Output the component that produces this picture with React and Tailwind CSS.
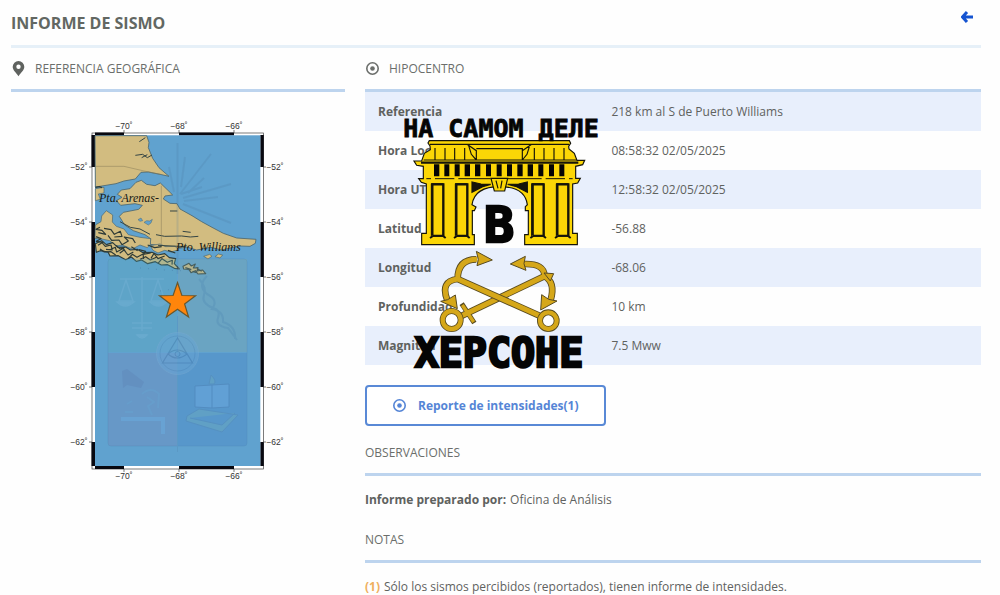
import React from "react";

const ROWS = [
  ["Referencia", "218 km al S de Puerto Williams"],
  ["Hora Local", "08:58:32 02/05/2025"],
  ["Hora UTC", "12:58:32 02/05/2025"],
  ["Latitud", "-56.88"],
  ["Longitud", "-68.06"],
  ["Profundidad", "10 km"],
  ["Magnitud", "7.5 Mww"],
];

const LATS = [
  [-52, 167],
  [-54, 222],
  [-56, 277],
  [-58, 332],
  [-60, 387],
  [-62, 442],
];
const LONS = [
  [-70, 124],
  [-68, 179],
  [-66, 234],
];

function PinIcon() {
  return (
    <svg className="h-4 w-4" viewBox="0 0 16 16" aria-hidden="true">
      <path
        fill="#5f625f"
        fillRule="evenodd"
        d="M7.500 0a5.800 5.800 0 0 1 5.800 5.800c0 3.200-3 5.600-5.800 9.400C4.700 11.400 1.700 9 1.700 5.800A5.800 5.800 0 0 1 7.500 0zm0 3.500a2.200 2.200 0 1 0 0 4.400 2.200 2.200 0 0 0 0-4.400z"
      />
    </svg>
  );
}

function TargetIcon() {
  return (
    <svg className="h-4 w-4" viewBox="0 0 16 16" aria-hidden="true">
      <circle cx="7.500" cy="7.500" r="5.700" fill="none" stroke="currentColor" strokeWidth="1.600" />
      <circle cx="7.500" cy="7.500" r="2.300" fill="currentColor" />
    </svg>
  );
}

function EpicenterMap() {
  return (
    <svg
      className="w-[225px]"
      viewBox="65 115 225 370"
      role="img"
      aria-label="Mapa del epicentro"
      fontFamily='"Liberation Sans", sans-serif'
    >
      <rect x="92" y="133" width="171.500" height="336" fill="#fff" stroke="#444" strokeWidth=".7" />
      <g fill="#080810">
        {[
          [135, 32],
          [222, 55],
          [332, 55],
          [442, 24],
        ].map(([y, h]) => (
          <g key={y}>
            <rect x="91.500" y={y} width="3.500" height={h} />
            <rect x="260.300" y={y} width="3.500" height={h} />
          </g>
        ))}
        {[132.5, 466].map((y) => (
          <g key={y}>
            <rect x="95" y={y} width="29" height="3" />
            <rect x="179" y={y} width="55" height="3" />
          </g>
        ))}
      </g>
      <rect x="95" y="135.300" width="165.300" height="330.700" fill="#60a2cf" />

      <g transform="translate(80 115) scale(.33333)" strokeLinejoin="round">
        <path
          fill="#d2bc80"
          stroke="#4b6670"
          strokeWidth="2.500"
          d="M45 62H200L207 82 205 98 218 130 237 158 267 184 240 178 205 171 183 172 166 192 132 198 108 206 66 213 46 216Z"
        />
        <path
          fill="#d2bc80"
          stroke="#4b6670"
          strokeWidth="2.500"
          d="M168 202L184 196 200 208 225 212 241 204 270 232 278 240 255 243 250 252 270 265 291 266 300 282 336 302 365 320 396 337 430 355 470 369 528 373 526 385 510 394 480 393 460 397 425 405 392 397 350 405 320 396 285 402 240 392 211 388 212 371 195 359 160 347 134 330 118 304 130 292 176 283 187 271 165 266 122 271 109 257 126 247 112 238 124 225 150 221Z"
        />
        <path fill="#d2bc80" stroke="#4b6670" strokeWidth="2" d="M46 221L72 217 72 234 55 237 61 253 46 257ZM46 330L63 320 65 303 79 287 98 300 97 321 109 334 132 342 145 359 180 367 212 371 211 388 202 398 180 390 157 402 127 390 109 393 89 377 66 372 45 370Z" />
        <path fill="#d2bc80" stroke="#2d3d3b" strokeWidth="3.500" d="M46 386l19-9 14 12 19-6 15 14 24-1 14 9 21-2 17 10 27-1 18 8 20-4 14 12 19 3-4 15 15 16-15-2-20-11-19 1-18-10-23 6-18-11-16 4-15-13-17 8-22-12-25 1-6-12-23-4-12 5zM309 454l18-9 7 8 12-6-6 12 14-1-3 10 17-3 9 11-23 1-8-10-13 6-6-10-16-1z" />
        <path fill="#d2bc80" stroke="#4b6670" strokeWidth="2" d="M371 424l18-6 7 6-12 8zM405 425l10-8 13 3-8 9zM211 392l29-5 17 8 28-1 11 10-23 7-19-5-20 8-15-8z" />
        <path
          fill="none"
          stroke="#2d3a36"
          strokeWidth="3.500"
          d="M46 217l12-2 8 3M60 337l-12 6 18 3 11 12-22-5M72 340l21 4 10 14 18-9 5 15-23 2M84 361l11 15 22-1 9 14 19-11-12-12 25 5 8 13M48 365l15 6-14 8 21 3M54 391l12-8 10 11 17-4 4 15-19-2M88 405l18-8 4 14 20-11 9 14M119 415l13-10 12 15 16-9M145 430l12-12 14 9 18-10 2 15M177 404l20 5-8 9 23-4M180 433l17-8 14 10 18-8M213 430l9-15 12 16 20-8M234 445l12-14 16 11 15-6-1 13M154 395l19 12M203 390l21 8 21-3M264 406l22 8M316 458l18 6M338 469l12 4M352 461l13 8M60 402l13 9 20-1 14 10M109 391l9 9 16-3"
        />
        <path fill="none" stroke="#344443" strokeWidth="3" d="M228 359l26 5 51-1 26 3 24-2M308 349l24 3M234 391l83 4M120 320l31 17 29 5 30 16M178 80l18-12M166 121l22-3 14 10 14-8M185 128l17-9M270 288l22 0" />
        <path fill="none" stroke="#887c57" strokeWidth="1.500" d="M46 154h86l60 14 50 10M244 212v175" />
        <path fill="#60a2cf" stroke="#4b6670" strokeWidth="1.500" d="M174 314l9-5 5 8-8 2zM192 322l8-5 9 1 8-5-4 11-8 6z" />
      </g>

      <g fill="none" stroke="#47759b" opacity=".18">
        <path d="M177.500 143v131M180 194l31-40M183 198l48-14M183 204l48 19M181 194l21-7M184 201l34-4M174 192l-5-25M181 187l4-30M188 193l16-15" strokeWidth="2" />
        <rect x="108" y="259" width="139" height="187" rx="3" />
        <path d="M177.500 316v136" />
      </g>
      <path fill="#58a8b8" opacity=".28" d="M108 259h69v93h-69z" />
      <path fill="#80a8a8" opacity=".32" d="M178 259h69v93h-69z" />
      <path fill="#8176ad" opacity=".22" d="M108 353h69v93h-66q-3 0-3-3z" />
      <path fill="#4a88c6" opacity=".4" d="M178 353h69v90q0 3-3 3h-66z" />
      <g fill="none" stroke="#79b4d8" opacity=".38" strokeWidth="1.500">
        <path d="M142 277v54M120 279h44M126 280l-7 21h14zM158 280l-7 21h14zM132 323h20M132 328h20M137 335h10" />
        <path d="M117 302q8 8 17 0zM150 302q8 8 17 0zM137 335q5 6 10 0z" fill="#79b4d8" />
      </g>
      <path
        fill="none"
        stroke="#477fae"
        opacity=".25"
        strokeWidth="2"
        d="M199 279q8 8 5 16t9 13q8 2 5 10t10 10l9 12M207 276q-10 10 0 18 12 6 5 15 12 2 11 13 13 4 12 17"
      />
      <g opacity=".55" fill="none">
        <circle cx="177.500" cy="353.500" r="21" stroke="#75a9d2" fill="#68a4d4" />
        <circle cx="177.500" cy="353.500" r="17.500" stroke="#4f88ba" strokeWidth=".7" />
        <path d="M177.500 338l-15 25h30zM168 354q9-8 19 0-10 8-19 0z" stroke="#4a82b4" strokeWidth="1.200" />
        <circle cx="177.500" cy="354" r="2.500" stroke="#4a82b4" />
      </g>
      <g opacity=".3">
        <path fill="none" stroke="#6dbaf0" strokeWidth="4" d="M121 419h42v15" />
        <path fill="#5a7eb3" d="M122 371l5-2 17 13-3 6-14-3-4 3z" />
        <path fill="none" stroke="#65a9d5" strokeWidth="2" d="M142 394q9-8 17 0l-1 14M147 397l7 5-6 4 4 9M127 404l5-3M125 412h8" />
        <path fill="#79b5ef" stroke="#4975a9" d="M195 386l17-1 17-1v23l-17 1-17-1zM212 385v23" />
        <path fill="#75b6b9" stroke="#5383ab" d="M187 416l12-7 39 6-16 17-36-11zM190 418l32 7 13-12M211 375q6 6 3 9h-5z" />
      </g>
      <path fill="none" stroke="#4b83ad" opacity=".7" strokeDasharray="1 7" d="M140 268l25 2 22 1 15-7M160 291l21-3" />

      <path
        fill="#ff850b"
        stroke="#69572d"
        strokeWidth="1.200"
        d="M177.500 282.500L181.900 295.500 195.500 295.700 184.600 303.900 188.600 317 177.500 309.200 166.400 317 170.400 303.900 159.500 295.700 173.100 295.500Z"
      />
      <g fontFamily='"Liberation Serif", serif' fontStyle="italic" fontSize="12" fill="#171914">
        <text x="99" y="202">Pta. Arenas-</text>
        <text x="176" y="251">Pto. Williams</text>
      </g>
      <g fontSize="8.500" fill="#333" textAnchor="middle">
        {LONS.map(([v, x]) => (
          <g key={v}>
            <text x={x} y="129">{`−${-v}˚`}</text>
            <text x={x} y="479">{`−${-v}˚`}</text>
            <path d={`M${x} 130v3M${x} 469v3`} stroke="#444" strokeWidth=".7" />
          </g>
        ))}
        {LATS.map(([v, y]) => (
          <g key={v}>
            <text x="79" y={y + 3}>{`−${-v}˚`}</text>
            <text x="275" y={y + 3}>{`−${-v}˚`}</text>
            <path d={`M89 ${y}h3M263 ${y}h3`} stroke="#444" strokeWidth=".7" />
          </g>
        ))}
      </g>
    </svg>
  );
}

function ChannelLogo() {
  return (
    <svg
      className="pointer-events-none absolute top-[18px] left-[30px] w-[210px]"
      viewBox="395 110 210 265"
      fontFamily='"DejaVu Sans Mono", monospace'
      fontWeight="700"
      role="img"
      aria-label="На самом деле в Херсоне"
    >
      <g transform="translate(395 110) scale(.33333)" stroke="#15140a" strokeWidth="3.500">
        <path
          fill="#fbd606"
          d="M103 92H523L527 100 521 109 522 117 538 130 546 151H569L563 164 542 169V205H556L548 219 533 222V370H547V404H389V374H400V302H391V290L397 284Q390 230 314 230 239 230 231 284L243 291 238 302H232V374H238V404H80V370H94V222L79 217 71 206H85V169L65 166 57 153H80L88 130 106 119 105 108 99 99Z"
        />
        <path fill="none" d="M105 103H522M86 150H545M120 114V150M150 114V150M179 114V150M209 114V150M418 114V150M447 114V150M477 114V150M507 114V150M216 103L244 122V150M244 116H382V150M410 103L382 122M221 107l8 26 15 17M404 107l-8 26-14 17" />
        <path d="M78 158H550" strokeWidth="7" />
        <path
          stroke="none"
          fill="#050505"
          d="M117 163h16v36h-16zM148 163h15v36h-15zM179 163h15v36h-15zM209 163h16v36h-16zM240 163h16v36h-16zM273 163h15v36h-15zM305 163h15v36h-15zM336 163h15v36h-15zM367 163h16v36h-16zM398 163h16v36h-16zM430 163h15v36h-15zM462 163h15v36h-15zM493 163h15v36h-15z"
        />
        <path fill="none" d="M94 206H108M120 206H178M190 206H287M337 206H440M452 206H510M522 206H533" strokeWidth="3" />
        <path d="M231 216V247L263 230 287 223 258 222ZM397 216V247L365 230 338 223 371 222Z" fill="#15140a" />
        <path d="M288 205H338L329 243H298Z" fill="#fbd606" />
        <path d="M303 212l6 23M321 212l-4 23" fill="none" />
        <path fill="#fbd606" strokeWidth="3" d="M109 221h36v158h-36zM181 221h36v158h-36zM410 221h36v158h-36zM484 221h36v158h-36z" />
        <path fill="none" strokeWidth="7" d="M112 375V223h33v156M184 375V223h33v156M413 375V223h33v156M487 375V223h33v156" />
        <path fill="none" strokeWidth="6" d="M105 384l10-7h28l9 7M177 384l10-7h28l9 7M406 384l10-7h28l9 7M480 384l10-7h28l9 7" />
      </g>

      <g transform="translate(395 245) scale(.33333)" strokeLinejoin="round">
        <g fill="none">
          <g stroke="#574a20" strokeWidth="20">
            <path d="M188 218L448 94" />
            <path d="M200 176l38 58" strokeWidth="15" />
            <path d="M388 57Q448 55 449 94 482 112 467 165" />
          </g>
          <g stroke="#d5a719" strokeWidth="15">
            <path d="M188 218L448 94" />
            <path d="M202 180l34 51" strokeWidth="10" />
            <path d="M386 57Q448 55 449 94 482 112 467 165" />
          </g>
          <path d="M346 57L391 34 387 56 393 76ZM437 195L440 149 461 163 486 168ZM447 84l29 2-10 22z" fill="#d5a719" stroke="#574a20" strokeWidth="3" />
          <g stroke="#574a20" strokeWidth="20">
            <path d="M442 216L188 102Q188 43 244 43M188 102Q134 108 157 166" />
          </g>
          <g stroke="#d5a719" strokeWidth="15">
            <path d="M444 217L188 102Q188 43 247 43M188 102Q134 108 158 168" />
          </g>
          <path d="M244 19L292 45 246 62 250 43ZM187 191L137 169 158 164 181 150Z" fill="#d5a719" stroke="#574a20" strokeWidth="3" />
          <circle cx="170" cy="225" r="27" stroke="#574a20" strokeWidth="18" />
          <circle cx="170" cy="225" r="27" stroke="#d5a719" strokeWidth="13" />
          <circle cx="460" cy="227" r="25" stroke="#574a20" strokeWidth="18" />
          <circle cx="460" cy="227" r="25" stroke="#d5a719" strokeWidth="13" />
        </g>
      </g>

      <g fill="#050505" stroke="#050505" textAnchor="middle">
        <text x="501" y="137" fontSize="25" strokeWidth=".8">НА САМОМ ДЕЛЕ</text>
        <text x="499" y="242" fontSize="50" strokeWidth="2.500">В</text>
        <text x="499" y="367" fontSize="40" strokeWidth="2.500">ХЕРСОНЕ</text>
      </g>
    </svg>
  );
}

function SectionTitle({ icon, children }) {
  return (
    <h2 className="flex h-11 items-center gap-2 border-b-[3px] border-[#bdd4ee] text-xs text-[#6b6e6b]">
      {icon}
      {children}
    </h2>
  );
}

export default function App() {
  return (
    <main className="min-h-screen bg-[#fefefe] pr-[19px] pl-[11px] font-['Open_Sans',sans-serif] text-xs text-[#5f625f]">
      <header className="flex h-12 items-center justify-between border-b-[3px] border-[#e6f0f8]">
        <h1 className="text-base font-bold text-[#626762]">INFORME DE SISMO</h1>
        <a href="#volver" aria-label="Volver" className="mr-2 mb-3 text-[#1554d1]">
          <svg className="h-3 w-3" viewBox="0 0 12 12" aria-hidden="true">
            <path d="M6 1L1.500 6 6 11M2 6h10" fill="none" stroke="currentColor" strokeWidth="3" strokeLinejoin="round" />
          </svg>
        </a>
      </header>

      <div className="grid grid-cols-[334fr_616fr] gap-5">
        <section>
          <SectionTitle icon={<PinIcon />}>REFERENCIA GEOGRÁFICA</SectionTitle>
          <div className="flex justify-center pt-[23px] pr-0.5">
            <EpicenterMap />
          </div>
        </section>

        <div>
          <section>
            <SectionTitle icon={<TargetIcon />}>HIPOCENTRO</SectionTitle>
            <div className="relative">
              <table className="w-full table-fixed text-left">
                <tbody>
                  {ROWS.map(([label, value]) => (
                    <tr key={label} className="h-[39px] odd:bg-[#e8effc]">
                      <th scope="row" className="w-2/5 py-0 pl-[13px] font-bold">
                        {label}
                      </th>
                      <td className="p-0">{value}</td>
                    </tr>
                  ))}
                </tbody>
              </table>
              <ChannelLogo />
            </div>
            <button
              type="button"
              className="mt-5 flex h-[41px] items-center gap-2.5 rounded-[4px] border-2 border-[#5989d6] bg-white px-[25px] font-bold text-[#5585d6]"
            >
              <TargetIcon />
              Reporte de intensidades(1)
            </button>
          </section>

          <section className="pt-1.5">
            <SectionTitle>OBSERVACIONES</SectionTitle>
            <p className="flex h-[43px] items-center gap-1 pt-1">
              <strong>Informe preparado por:</strong> Oficina de Análisis
            </p>
          </section>

          <section>
            <SectionTitle>NOTAS</SectionTitle>
            <p className="flex h-8 items-end gap-1">
              <span className="font-bold text-[#efb05f]">(1)</span>
              Sólo los sismos percibidos (reportados), tienen informe de intensidades.
            </p>
          </section>
        </div>
      </div>
    </main>
  );
}
